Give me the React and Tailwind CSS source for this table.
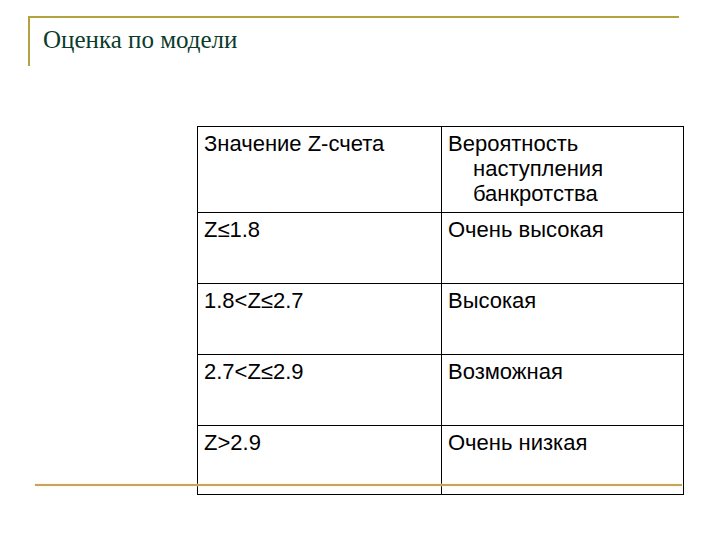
const rows = [
  { z: 'Z≤1.8', p: 'Очень высокая', h: 'h-[71px]' },
  { z: '1.8<Z≤2.7', p: 'Высокая', h: 'h-[71px]' },
  { z: '2.7<Z≤2.9', p: 'Возможная', h: 'h-[71px]' },
  { z: 'Z>2.9', p: 'Очень низкая', h: 'h-[69px]' },
]

const cell = 'border-r border-b border-black pt-[4px] pl-[6px]'

const App = () => {
  return (
    <div className="relative w-[720px] h-[540px] bg-white overflow-hidden">
      {/* title frame */}
      <div className="ml-[28px] mt-[16px] w-[651px] h-[50px] border-t-2 border-l-2 border-[#b3a240] pt-[9px] pl-[13px]">
        <h1
          className="text-[25px] leading-none text-[#0b3b2a]"
          style={{ fontFamily: '"Liberation Serif", "Times New Roman", serif' }}
        >
          Оценка по модели
        </h1>
      </div>

      {/* table */}
      <div
        className="ml-[197px] mt-[60px] w-[487px] border-l border-t border-black grid grid-cols-[244px_242px] text-[22px] leading-[25px] text-black"
        style={{ fontFamily: '"Liberation Sans", Arial, sans-serif' }}
      >
        <div className={`${cell} h-[86px]`}>Значение Z-счета</div>
        <div className={`${cell} h-[86px] pl-[31px] -indent-[25px]`}>
          Вероятность
          <br />
          наступления
          <br />
          банкротства
        </div>
        {rows.map((r) => (
          <div key={r.z} className="contents">
            <div className={`${cell} ${r.h}`}>{r.z}</div>
            <div className={`${cell} ${r.h}`}>{r.p}</div>
          </div>
        ))}
      </div>

      {/* bottom rule, drawn over the table */}
      <div className="absolute left-[35px] top-[484px] w-[647px] h-[2px] bg-[#c6a45e] shadow-[0_0_2px_#fbeab0]" />
    </div>
  )
}

export default App
